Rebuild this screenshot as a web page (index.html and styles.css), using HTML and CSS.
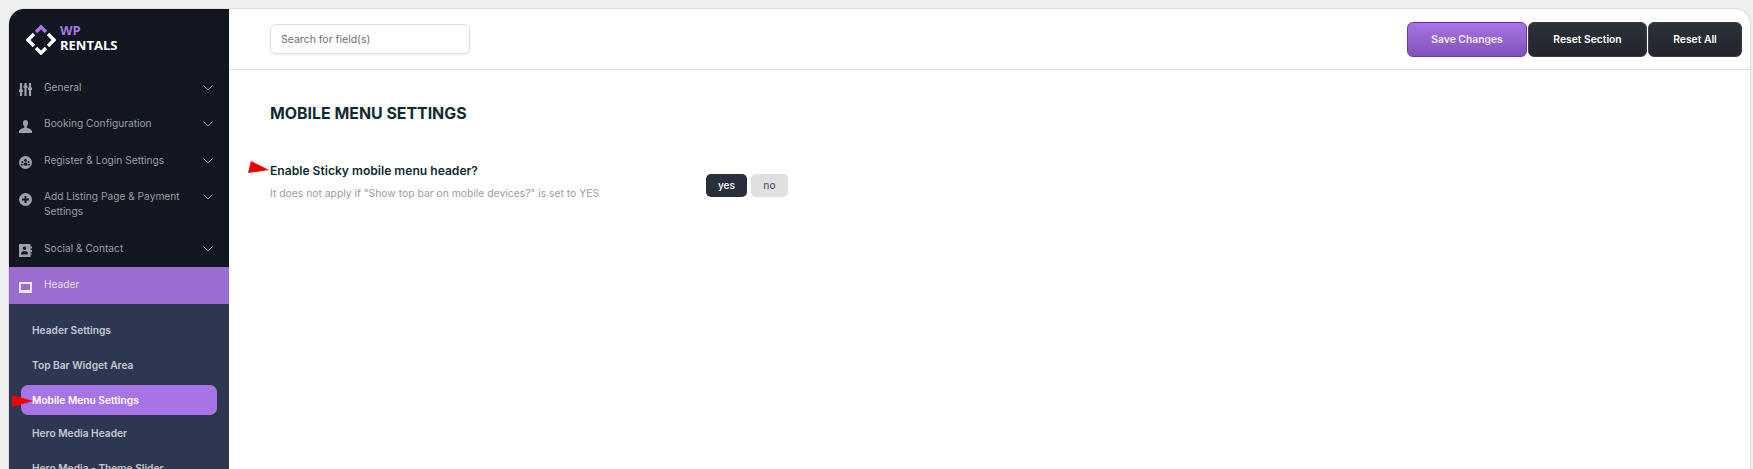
FILE: index.html
```html
<!DOCTYPE html>
<html lang="en">
<head>
    <meta charset="UTF-8">
    <meta name="viewport" content="width=device-width, initial-scale=1.0">
    <title>WpRentals Options</title>
    <link rel="stylesheet" href="styles.css">
</head>
<body>
    <div class="panel">
        <aside class="sidebar">
            <div class="logo">
                <svg class="logo-mark" width="30" height="32" viewBox="0 0 30 32">
                    <path d="M10 9 L15 4 L20 9" fill="none" stroke="#a974e8" stroke-width="3.4"/>
                    <path d="M8 11 L2 17 L8 23" fill="none" stroke="#fff" stroke-width="3.4"/>
                    <path d="M22 11 L28 17 L22 23" fill="none" stroke="#fff" stroke-width="3.4"/>
                    <path d="M10 25 L15 30 L20 25" fill="none" stroke="#fff" stroke-width="3.4"/>
                </svg>
                <div class="logo-text"><span class="logo-wp">WP</span><span>RENTALS</span></div>
            </div>

            <div class="menu-item">
                <svg class="menu-icon" viewBox="0 0 13 13"><path d="M.9 0h2.200v6.500H4V9H3.100v4H.9V9H0V6.500h.9zM5.400 0h2.200v2.500h.9V5h-.9v8H5.400V5h-.9V2.500h.9zM9.900 0h2.200v4.500h.9V7h-.9v6H9.900V7H9V4.500h.9z"/></svg>
                <span class="menu-label">General</span>
                <svg class="chevron" viewBox="0 0 10 6"><path d="M.5.500 5 5 9.500.500"/></svg>
            </div>
            <div class="menu-item">
                <svg class="menu-icon" viewBox="0 0 13 13"><path d="M6.500 0C8.200 0 9 1.300 9 3c0 1.600-.7 3-1.300 3.600v1.200c1.700.6 5.300 1.400 5.300 3.700V13H0v-1.500c0-2.300 3.600-3.100 5.300-3.700V6.600C4.700 6 4 4.600 4 3c0-1.700.8-3 2.500-3z"/></svg>
                <span class="menu-label">Booking Configuration</span>
                <svg class="chevron" viewBox="0 0 10 6"><path d="M.5.500 5 5 9.500.500"/></svg>
            </div>
            <div class="menu-item">
                <svg class="menu-icon" viewBox="0 0 13 13"><path fill-rule="evenodd" d="M6.500 0a6.500 6.500 0 1 1 0 13a6.500 6.500 0 0 1 0-13zM6.500 3a1.400 1.400 0 1 0 0 2.800a1.400 1.400 0 0 0 0-2.800zM3.400 5a1 1 0 1 0 0 2a1 1 0 0 0 0-2zM9.600 5a1 1 0 1 0 0 2a1 1 0 0 0 0-2zM4.500 9.500h4V8c0-1-1-1.600-2-1.600s-2 .6-2 1.600zM1.800 9.500h2V7.700H2.600c-.5 0-.8.400-.8.800zM9.200 9.500h2v-1c0-.4-.3-.8-.8-.8H9.200z"/></svg>
                <span class="menu-label">Register &amp; Login Settings</span>
                <svg class="chevron" viewBox="0 0 10 6"><path d="M.5.500 5 5 9.500.500"/></svg>
            </div>
            <div class="menu-item">
                <svg class="menu-icon" viewBox="0 0 13 13"><path fill-rule="evenodd" d="M6.500 0a6.500 6.500 0 1 1 0 13a6.500 6.500 0 0 1 0-13zM5.500 3v2.500H3v2h2.500V10h2V7.500H10v-2H7.500V3z"/></svg>
                <span class="menu-label">Add Listing Page &amp; Payment Settings</span>
                <svg class="chevron" viewBox="0 0 10 6"><path d="M.5.500 5 5 9.500.500"/></svg>
            </div>
            <div class="menu-item">
                <svg class="menu-icon" viewBox="0 0 13 13"><path fill-rule="evenodd" d="M0 0h11.500v2.500H13v2h-1.500v1.500H13v2h-1.500v1.500H13v1h-1.500V13H0zM5.500 2.500a1.700 1.700 0 1 0 0 3.400a1.700 1.700 0 0 0 0-3.400zM2.200 10.500h6.600V9c0-1.300-2-2-3.300-2s-3.300.7-3.300 2z"/></svg>
                <span class="menu-label">Social &amp; Contact</span>
                <svg class="chevron" viewBox="0 0 10 6"><path d="M.5.500 5 5 9.500.500"/></svg>
            </div>
            <div class="menu-item menu-item-open">
                <svg class="menu-icon" viewBox="0 0 13 13"><path fill-rule="evenodd" d="M0 1h13v11H0zM2 3v6h9V3z"/></svg>
                <span class="menu-label">Header</span>
            </div>

            <div class="submenu">
                <div class="submenu-item">Header Settings</div>
                <div class="submenu-item">Top Bar Widget Area</div>
                <div class="submenu-item submenu-item-active">Mobile Menu Settings</div>
                <div class="submenu-item">Hero Media Header</div>
                <div class="submenu-item">Hero Media - Theme Slider</div>
            </div>
        </aside>

        <main class="content">
            <div class="topbar">
                <input class="search" type="text" placeholder="Search for field(s)">
                <div class="actions">
                    <button class="btn btn-save">Save Changes</button>
                    <button class="btn btn-reset btn-section">Reset Section</button>
                    <button class="btn btn-reset btn-all">Reset All</button>
                </div>
            </div>

            <div class="section">
                <h1>MOBILE MENU SETTINGS</h1>
                <div class="field">
                    <div class="field-text">
                        <div class="field-title">Enable Sticky mobile menu header?</div>
                        <div class="field-desc">It does not apply if "Show top bar on mobile devices?" is set to YES</div>
                    </div>
                    <div class="toggle">
                        <span class="toggle-btn toggle-on">yes</span>
                        <span class="toggle-btn toggle-off">no</span>
                    </div>
                </div>
            </div>
        </main>
    </div>

    <!-- annotation arrows on the screenshot -->
    <svg class="arrow arrow-field" width="21" height="13" viewBox="0 0 21 13"><path d="M3 0 21 9 0 12z"/></svg>
    <svg class="arrow arrow-menu" width="21" height="13" viewBox="0 0 21 13"><path d="M0 0 21 6 0 12z"/></svg>
</body>
</html>
```

FILE: styles.css
```css
html, body {
    height: 100%;
}
body {
    margin: 0;
    overflow: hidden;
    background-color: #efefef;
    font-family: Inter, "Liberation Sans", sans-serif;
    color: #0f2a30;
}
.panel {
    display: flex;
    height: 460px;
    margin: 8px 2px 0 8px;
    border: 1px solid #dedede;
    border-bottom: none;
    border-radius: 16px 16px 0 0;
    background-color: #fff;
    overflow: hidden;
}

/* sidebar */
.sidebar {
    flex: 0 0 220px;
    width: 220px;
    background-color: #121620;
}
.logo {
    display: flex;
    align-items: flex-start;
    height: 46.500px;
    padding: 14px 0 0 17px;
}
.logo-mark {
    flex: none;
}
.logo-text {
    display: flex;
    flex-direction: column;
    margin: 0 0 0 4px;
    font-family: "Open Sans", sans-serif;
    font-size: 13px;
    font-weight: 700;
    line-height: 14.500px;
    color: #fff;
}
.logo-wp {
    color: #a974e8;
}
.menu-item {
    display: flex;
    align-items: flex-start;
    padding: 10px 16px 11.500px 10px;
    color: #9a9ca5;
    font-size: 10.200px;
    line-height: 15px;
}
.menu-icon {
    flex: none;
    width: 13px;
    height: 13px;
    margin: 3.500px 12px -2px 0;
    fill: #9fa1a8;
}
.menu-label {
    flex: 1;
}
.chevron {
    flex: none;
    width: 10px;
    height: 6px;
    margin: 5px 0 0 12px;
    fill: none;
    stroke: #9a9ca5;
}
.menu-item-open {
    padding-bottom: 12px;
    background-color: #9b6dd0;
    color: #eadff7;
}
.menu-item-open .menu-icon {
    fill: #efe6f9;
}
.submenu {
    padding: 10.500px 12px 0;
    background-color: #2d3752;
    height: 200px;
}
.submenu-item {
    padding: 8.500px 11px;
    margin-bottom: 2.500px;
    border-radius: 7px;
    color: #c3c7d2;
    font-size: 10.200px;
    font-weight: 600;
    line-height: 15px;
}
.submenu-item-active {
    margin-top: 4px;
    padding: 7.500px 11px;
    background-color: #a674e4;
    color: #fff;
}

/* top bar */
.content {
    flex: 1;
}
.topbar {
    display: flex;
    align-items: center;
    justify-content: space-between;
    height: 60px;
    padding: 0 8px 0 41px;
    border-bottom: 1px solid #dfdfe4;
}
.search {
    width: 200px;
    height: 30px;
    box-sizing: border-box;
    padding: 0 10px;
    border: 1px solid #dddde6;
    border-radius: 6px;
    box-shadow: 0 1px 2px rgba(60,60,90,0.1);
    font-family: Inter, sans-serif;
    font-size: 10.500px;
}
.search::placeholder {
    color: #6b6e7a;
    opacity: 1;
}
.actions {
    display: flex;
    gap: 1px;
}
.btn {
    height: 35px;
    padding: 0;
    border-radius: 6px;
    color: #fff;
    font-family: Inter, sans-serif;
    font-size: 10.300px;
    font-weight: 600;
    cursor: pointer;
}
.btn-save {
    width: 120px;
    border: 1px solid #6a35a5;
    background: linear-gradient(#a674e4, #8253bb);
    color: #f2eafb;
}
.btn-reset {
    border: 1px solid #3a3e46;
    background: linear-gradient(#2c3037, #22262c);
}
.btn-section {
    width: 119px;
}
.btn-all {
    width: 94px;
}

/* section */
.section {
    padding: 34px 0 0 41px;
}
h1 {
    margin: 0 0 39px;
    font-size: 15.900px;
    font-weight: 700;
    line-height: 20px;
}
.field {
    display: flex;
    align-items: flex-start;
}
.field-text {
    width: 436px;
}
.field-title {
    font-size: 12.100px;
    font-weight: 600;
    line-height: 16px;
}
.field-desc {
    margin-top: 6.500px;
    color: #9a9ba5;
    font-size: 10.350px;
    line-height: 14px;
}
.toggle {
    display: flex;
    gap: 4px;
    margin-top: 11px;
}
.toggle-btn {
    height: 23px;
    border-radius: 5px;
    font-size: 10.200px;
    font-weight: 500;
    line-height: 22px;
    text-align: center;
}
.toggle-on {
    width: 41px;
    background-color: #2a2d3c;
    color: #fff;
}
.toggle-off {
    width: 37px;
    background-color: #e0e0e0;
    color: #5b5d78;
}

/* annotation arrows */
.arrow {
    position: absolute;
    fill: #f00000;
}
.arrow-field {
    left: 248px;
    top: 161px;
}
.arrow-menu {
    left: 12px;
    top: 395px;
}
```
